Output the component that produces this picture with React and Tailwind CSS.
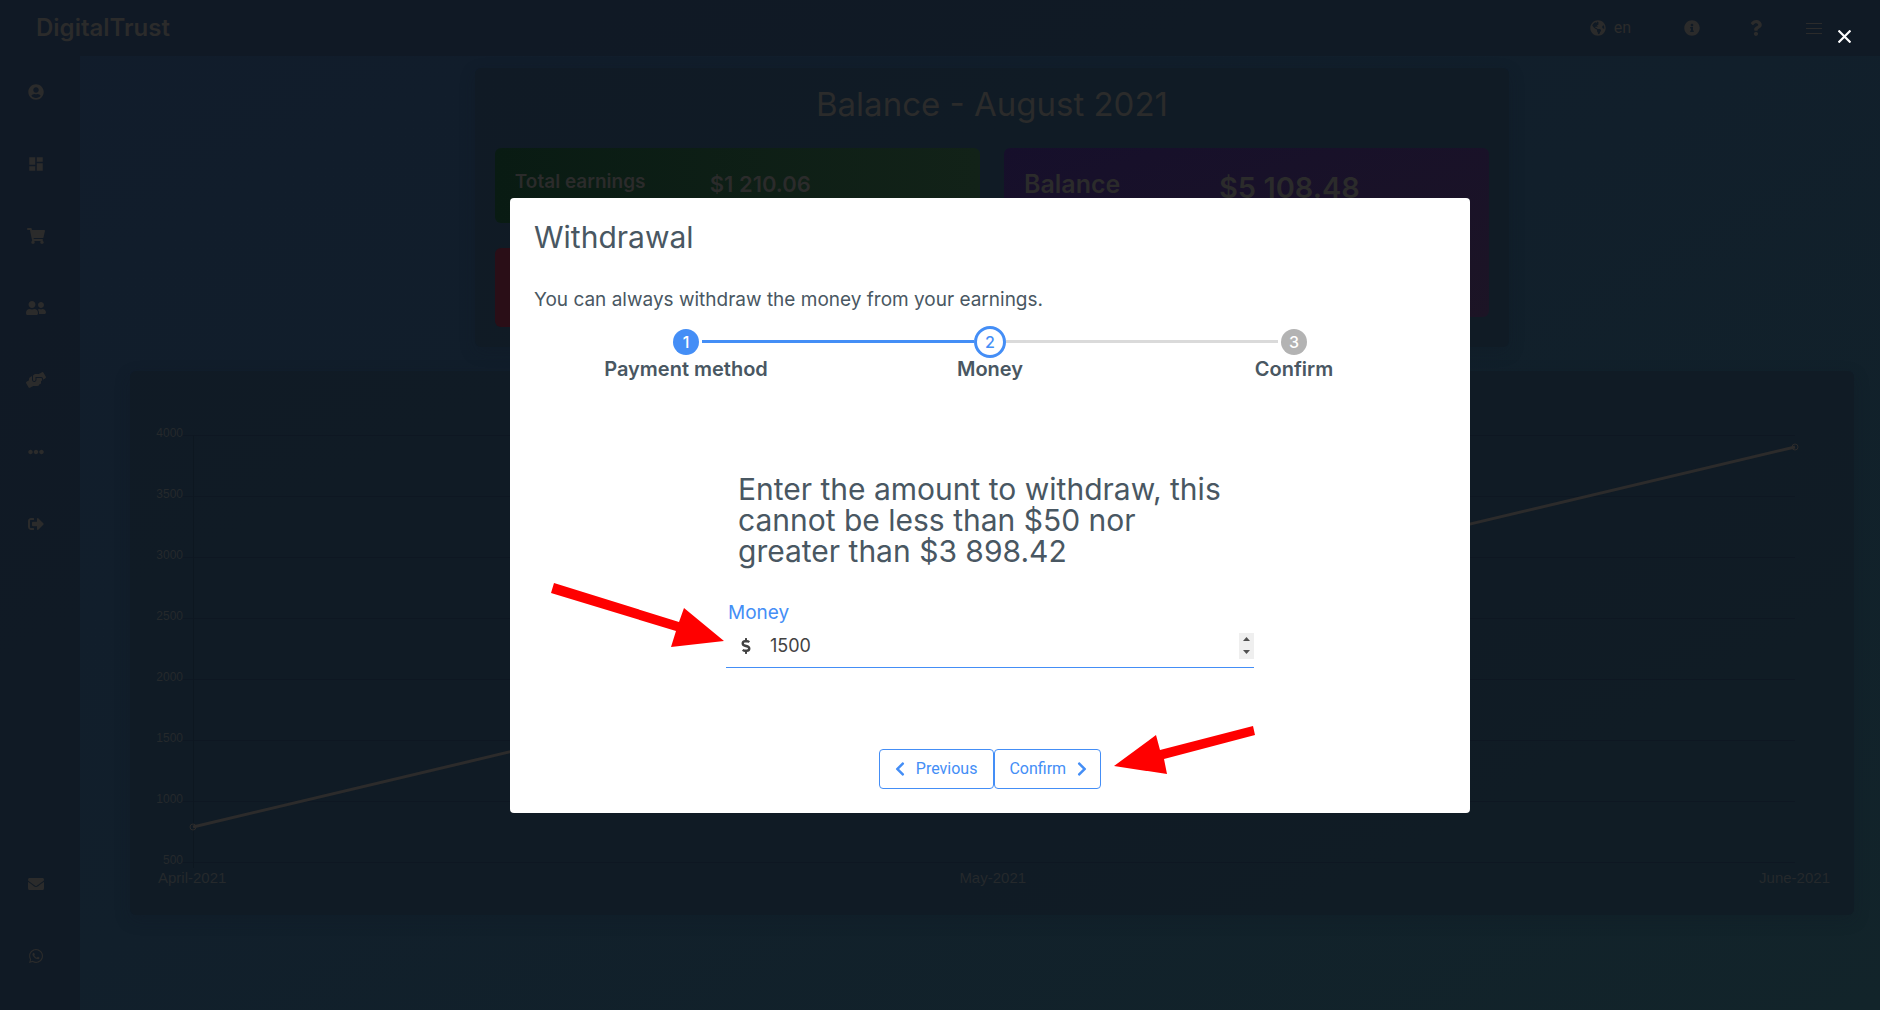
import {
  FaUserCircle, FaShoppingCart, FaUserFriends, FaHandsHelping, FaEllipsisH, FaSignOutAlt,
  FaEnvelope, FaWhatsapp, FaGlobeAmericas, FaInfoCircle, FaQuestion, FaDollarSign,
  FaChevronLeft, FaChevronRight,
} from "react-icons/fa";
import { useRef } from "react";
import { MdDashboard } from "react-icons/md";

const mainLinks = [
  { label: "Profile", icon: <FaUserCircle className="size-4" /> },
  { label: "Dashboard", icon: <MdDashboard className="size-[18px]" /> },
  { label: "Shop", icon: <FaShoppingCart className="size-[18px]" /> },
  { label: "Referrals", icon: <FaUserFriends className="size-5" /> },
  { label: "Withdrawals", icon: <FaHandsHelping className="size-5" /> },
  { label: "More", icon: <FaEllipsisH className="size-4" /> },
  { label: "Sign out", icon: <FaSignOutAlt className="size-4" /> },
];
const contactLinks = [
  { label: "Email", icon: <FaEnvelope className="size-4" /> },
  { label: "WhatsApp", icon: <FaWhatsapp className="size-4" /> },
];

const ticks = [4000, 3500, 3000, 2500, 2000, 1500, 1000, 500];

function NavLinks({ items }) {
  return items.map(({ label, icon }) => (
    <a key={label} href="#" aria-label={label} className="flex h-[72px] w-[72px] items-center justify-center">
      {icon}
    </a>
  ));
}

function Header() {
  return (
    <header className="flex h-14 items-center justify-between bg-[#101924]/80 pr-[58px] pl-9">
      <a href="#" className="text-2xl font-semibold">DigitalTrust</a>
      <nav className="flex items-center font-[Roboto,sans-serif] text-base">
        <button className="mr-[53px] flex items-center gap-2">
          <FaGlobeAmericas className="size-4" />
          en
        </button>
        <button aria-label="Information" className="mr-12"><FaInfoCircle className="size-4" /></button>
        <button aria-label="Help" className="mr-[42px]"><FaQuestion className="size-4" /></button>
        <button aria-label="Menu" className="flex w-4 flex-col gap-1">
          <span className="h-px bg-[#2b2b2b]" />
          <span className="h-px bg-[#2b2b2b]" />
          <span className="h-px bg-[#2b2b2b]" />
        </button>
      </nav>
    </header>
  );
}

function Balance() {
  return (
    <section className="w-3/5 rounded-md bg-[#101924]/70 p-5 pt-4 shadow-[0_5px_15px_#0f192440]">
      <h1 className="mb-6 text-center text-[33px] leading-10">Balance - August 2021</h1>
      <div className="grid grid-cols-2 gap-6">
        <div className="flex flex-col gap-[25px]">
          <div className="flex h-[75px] rounded-md bg-linear-to-r from-[#091b13] to-[#122218] px-5 pt-5">
            <span className="w-[195px] text-[19px] leading-7 font-semibold">Total earnings</span>
            <span className="text-[22px] leading-8 font-semibold">$1 210.06</span>
          </div>
          <div className="h-[79px] rounded-md bg-[#2a0e17]" />
        </div>
        <div className="flex h-[169px] rounded-md bg-linear-to-br from-[#160f2b] to-[#1c1425] px-5 pt-5">
          <span className="w-[195px] text-[25px] leading-8 font-semibold">Balance</span>
          <span className="text-[29px] leading-10 font-semibold">$5 108.48</span>
        </div>
      </div>
    </section>
  );
}

function Chart() {
  return (
    <section className="flex h-[544px] w-full rounded-md bg-[#101924]/70 pt-16 pr-[59px] font-['Liberation_Sans',sans-serif] text-[#25292c] shadow-[0_5px_15px_#0f192440]">
      <ul className="-mt-[10px] w-[53px] text-right text-xs">
        {ticks.map((t) => <li key={t} className="h-[61px]">{t}</li>)}
      </ul>
      <div className="ml-[10px] flex-1">
        <svg className="block h-[433px] w-full overflow-visible" role="img" aria-label="Monthly earnings">
          {ticks.map((t, i) => (
            <line key={t} x1="-10" x2="100%" y1={i * 61 + 0.5} y2={i * 61 + 0.5} stroke="#0e1722" />
          ))}
          <line x1="0.5" x2="0.5" y1="0" y2="433" stroke="#0d1720" />
          <line x1="0" y1="392" x2="100%" y2="12" stroke="#2c2b2b" strokeWidth="3" />
          <circle cx="0" cy="392" r="3" fill="none" stroke="#2c2b2b" />
          <circle cx="100%" cy="12" r="3" fill="none" stroke="#2c2b2b" />
        </svg>
        <div className="-mx-[35px] flex justify-between text-[15px] leading-5">
          <span>April-2021</span>
          <span>May-2021</span>
          <span>June-2021</span>
        </div>
      </div>
    </section>
  );
}

function Stepper() {
  return (
    <ol className="grid grid-cols-3 text-center text-base font-medium">
      <li>
        <div className="flex h-8 items-center">
          <span className="flex-1" />
          <span className="mx-[3px] size-[26px] rounded-full bg-[#448ef6] leading-[26px] text-white">1</span>
          <span className="h-[3px] flex-1 bg-[#448ef6]" />
        </div>
        <span className="block text-xl leading-[22px] font-semibold">Payment method</span>
      </li>
      <li aria-current="step">
        <div className="flex h-8 items-center">
          <span className="h-[3px] flex-1 bg-[#448ef6]" />
          <span className="size-8 rounded-full border-3 border-[#448ef6] leading-[26px] text-[#448ef6]">2</span>
          <span className="h-[3px] flex-1 bg-[#dadada]" />
        </div>
        <span className="block text-xl leading-[22px] font-semibold">Money</span>
      </li>
      <li>
        <div className="flex h-8 items-center">
          <span className="h-[3px] flex-1 bg-[#dadada]" />
          <span className="mx-[3px] size-[26px] rounded-full bg-[#b3b3b3] leading-[26px] text-white">3</span>
          <span className="flex-1" />
        </div>
        <span className="block text-xl leading-[22px] font-semibold">Confirm</span>
      </li>
    </ol>
  );
}

function AmountField() {
  const input = useRef(null);
  return (
    <div className="flex h-[43px] items-center border-b border-[#448ef6] pl-3 text-[#424242]">
      <FaDollarSign className="mr-4 size-4" />
      <input
        ref={input}
        id="money"
        type="number"
        defaultValue="1500"
        className="min-w-0 flex-1 [appearance:textfield] bg-transparent text-lg leading-[26px] outline-none [&::-webkit-inner-spin-button]:appearance-none"
      />
      <div className="flex w-[15px] flex-col bg-[#efefef]">
        <button type="button" aria-label="Increase" className="flex h-[13px] items-center justify-center" onClick={() => input.current.stepUp()}>
          <svg className="h-1 w-[7px]" viewBox="0 0 7 4" fill="#505050"><path d="M0 4L3.5 0L7 4Z" /></svg>
        </button>
        <button type="button" aria-label="Decrease" className="flex h-[13px] items-center justify-center" onClick={() => input.current.stepDown()}>
          <svg className="h-1 w-[7px]" viewBox="0 0 7 4" fill="#505050"><path d="M0 0L3.5 4L7 0Z" /></svg>
        </button>
      </div>
    </div>
  );
}

function WithdrawalDialog() {
  return (
    <div role="dialog" aria-label="Withdrawal" className="relative w-[960px] max-w-full rounded bg-white p-6 text-[#495762]">
      <h2 className="text-[30px] leading-[30px]">Withdrawal</h2>
      <p className="mt-[34px] text-[19px] leading-7">You can always withdraw the money from your earnings.</p>
      <div className="mt-3">
        <Stepper />
      </div>
      <form className="mx-auto mt-[94px] w-[528px]" onSubmit={(e) => e.preventDefault()}>
        <h3 className="px-3 text-[30px] leading-[31px]">
          Enter the amount to withdraw, this cannot be less than $50 nor greater than $3 898.42
        </h3>
        <label htmlFor="money" className="mt-[34px] block px-[2px] text-[19px] leading-6 text-[#448ef6]">Money</label>
        <AmountField />
      </form>
      <div className="mt-[81px] flex justify-center font-[Roboto,sans-serif] text-base text-[#448ef6]">
        <button className="flex h-10 items-center rounded border border-[#448ef6] pr-4 pl-3">
          <FaChevronLeft className="mr-2 size-4" />
          Previous
        </button>
        <button className="flex h-10 items-center rounded border border-[#448ef6] pr-2.5 pl-3.5">
          Confirm
          <FaChevronRight className="ml-2 size-4" />
        </button>
      </div>
      <svg className="absolute top-[383px] left-[40px] h-[68px] w-[175px]" viewBox="0 0 175 68" fill="#ff0000" aria-hidden="true">
        <path d="M4 2L129 41L134 27L174 60L121 66L126 50L1 12Z" />
      </svg>
      <svg className="absolute top-[526px] left-[603px] h-[52px] w-[144px]" viewBox="0 0 144 52" fill="#ff0000" aria-hidden="true">
        <path d="M140 2L142 11L51 35L54 50L1 42L43 11L47 26Z" />
      </svg>
    </div>
  );
}

export default function App() {
  return (
    <div className="flex min-h-screen flex-col bg-linear-to-br from-[#111c2b] via-[#111f2b] to-[#12242a] font-[Inter,sans-serif] text-[#2b2b2b]">
      <Header />
      <div className="flex flex-1">
        <aside className="flex w-20 flex-col bg-[#101924]/80 pb-[18px]">
          <NavLinks items={mainLinks} />
          <div className="mt-auto">
            <NavLinks items={contactLinks} />
          </div>
        </aside>
        <main className="flex flex-1 flex-col items-center gap-6 pt-3 pr-[26px] pl-[50px]">
          <Balance />
          <Chart />
        </main>
      </div>
      <div className="fixed inset-0 flex items-center justify-center pl-[100px]">
        <WithdrawalDialog />
        <button aria-label="Close" className="absolute top-6 right-6 flex size-6 items-center justify-center">
          <svg className="size-[13px]" viewBox="0 0 12 12" stroke="#fff" strokeWidth="2" aria-hidden="true">
            <path d="M0.5 0.5L11.5 11.5M11.5 0.5L0.5 11.5" />
          </svg>
        </button>
      </div>
    </div>
  );
}
